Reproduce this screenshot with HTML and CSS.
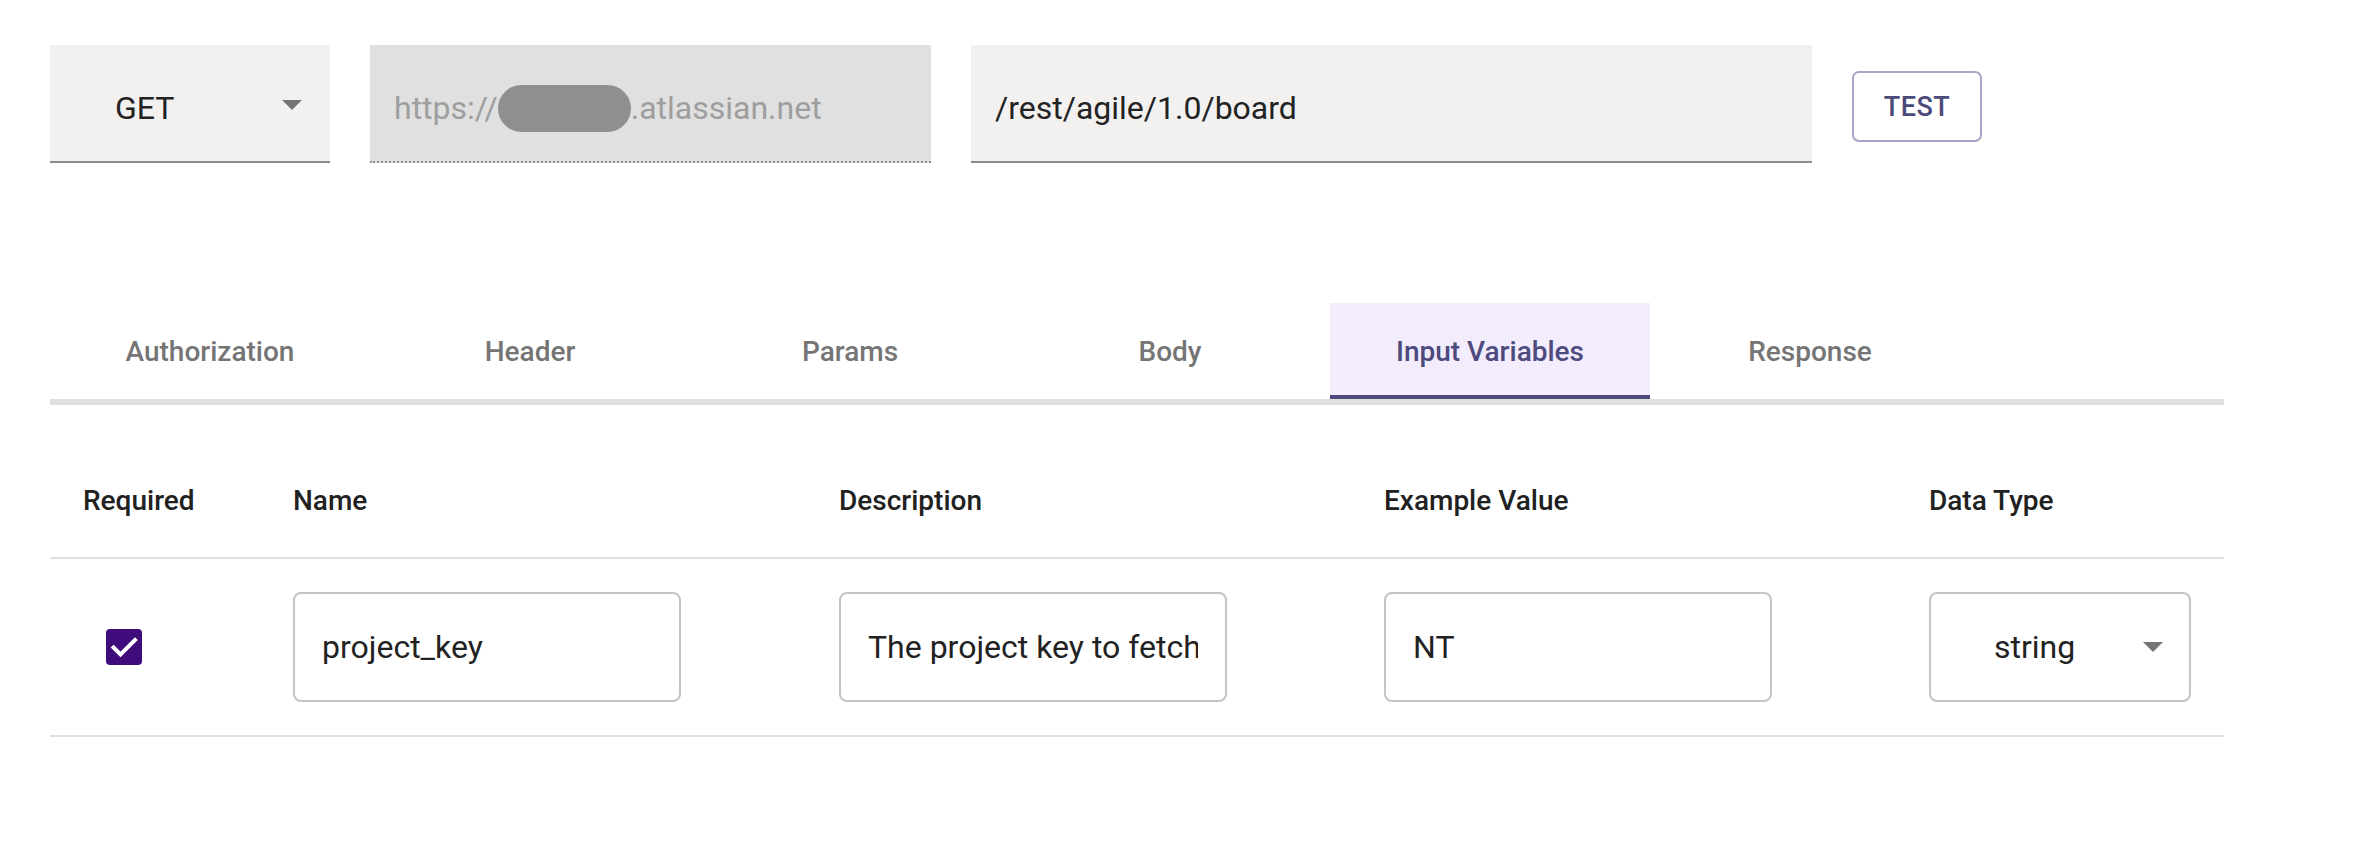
FILE: index.html
```html
<!DOCTYPE html>
<html lang="en">
<head>
<meta charset="utf-8">
<title>Request editor</title>
<link rel="stylesheet" href="styles.css">
</head>
<body>
<div class="page">
  <div class="request">
    <div class="field method">
      <span>GET</span>
      <span class="caret"></span>
    </div>
    <div class="field base">
      <span>https://</span><span class="blur"></span><span>.atlassian.net</span>
    </div>
    <div class="field path">
      <span>/rest/agile/1.0/board</span>
    </div>
    <button class="test-btn">TEST</button>
  </div>

  <div class="tabs">
    <div class="tab">Authorization</div>
    <div class="tab">Header</div>
    <div class="tab">Params</div>
    <div class="tab">Body</div>
    <div class="tab active">Input Variables</div>
    <div class="tab">Response</div>
  </div>

  <div class="vars">
    <div class="vars-row vars-head">
      <div class="cell">Required</div>
      <div class="cell">Name</div>
      <div class="cell">Description</div>
      <div class="cell">Example Value</div>
      <div class="cell">Data Type</div>
    </div>
    <div class="vars-row vars-body">
      <div class="cell">
        <span class="checkbox">
          <svg viewBox="0 0 36 36" width="36" height="36"><path d="M7.5 18.5 L14.5 25.5 L29 11" fill="none" stroke="#fff" stroke-width="4" stroke-linecap="square"/></svg>
        </span>
      </div>
      <div class="cell"><input class="text-input" type="text" value="project_key" readonly></div>
      <div class="cell"><input class="text-input" type="text" value="The project key to fetch" readonly></div>
      <div class="cell"><input class="text-input" type="text" value="NT" readonly></div>
      <div class="cell">
        <div class="select-box"><span>string</span><span class="caret"></span></div>
      </div>
    </div>
  </div>
</div>
</body>
</html>
```

FILE: styles.css
```css
html, body {
  margin: 0;
  padding: 0;
  background: #ffffff;
}

body {
  font-family: Roboto, "Liberation Sans", sans-serif;
  color: #222222;
}

.page {
  padding: 45px 0 0 50px;
  width: 2174px;
}

/* ---------- request bar ---------- */
.request {
  display: flex;
  align-items: center;
  gap: 40px;
}

.field {
  box-sizing: border-box;
  height: 118px;
  display: flex;
  align-items: center;
  font-size: 32px;
  padding-top: 10px;
  border-bottom: 2px solid #8c8c8c;
  white-space: nowrap;
}

.method {
  width: 280px;
  background: #f2f1f0;
  padding-left: 65px;
  padding-right: 28px;
  justify-content: space-between;
  color: #222222;
}

.method .caret {
  margin-top: -6px;
}

.caret {
  width: 0;
  height: 0;
  border-left: 10px solid transparent;
  border-right: 10px solid transparent;
  border-top: 10px solid #757575;
}

.base {
  width: 561px;
  background: #e0e0e0;
  border-bottom: 2px dotted #8c8c8c;
  padding-left: 24px;
  color: #9e9e9e;
}

.blur {
  display: inline-block;
  width: 133px;
  height: 47px;
  border-radius: 24px;
  background: #8f8f8f;
}

.path {
  width: 841px;
  background: #f2f1f0;
  padding-left: 24px;
  color: #222222;
}

.test-btn {
  box-sizing: border-box;
  width: 130px;
  height: 71px;
  margin-top: 5px;
  border: 2px solid #a8a5c4;
  border-radius: 7px;
  background: #ffffff;
  color: #4b4a7b;
  font-family: Roboto, "Liberation Sans", sans-serif;
  font-weight: 500;
  font-size: 27px;
  letter-spacing: 0.5px;
  padding: 0;
}

/* ---------- tabs ---------- */
.tabs {
  margin-top: 140px;
  display: flex;
  border-bottom: 6px solid #e0e0e0;
}

.tab {
  box-sizing: border-box;
  width: 320px;
  height: 96px;
  padding-top: 4px;
  border-bottom: 4px solid transparent;
  display: flex;
  align-items: center;
  justify-content: center;
  font-size: 28px;
  font-weight: 500;
  color: #757575;
}

.tab.active {
  background: #f2ecfd;
  color: #4d4a7e;
  border-bottom-color: #4d4a7e;
}

/* ---------- variables table ---------- */
.vars {
  margin-top: 38px;
}

.vars-row {
  display: grid;
  grid-template-columns: 210px 546px 545px 545px 328px;
  border-bottom: 2px solid #e0e0e0;
  align-items: center;
}

.vars-head {
  height: 114px;
}

.vars-body {
  padding: 33px 0;
}

.cell {
  padding-left: 33px;
  font-size: 28px;
  font-weight: 500;
  color: #212121;
  display: flex;
  align-items: center;
}

.checkbox {
  margin-left: 23px;
  width: 36px;
  height: 36px;
  border-radius: 4px;
  background: #3f0d7b;
  display: flex;
}

.text-input {
  box-sizing: border-box;
  width: 388px;
  height: 110px;
  border: 2px solid #c4c4c4;
  border-radius: 8px;
  padding: 0 27px 0 27px;
  margin: 0;
  font-family: Roboto, "Liberation Sans", sans-serif;
  font-size: 32px;
  font-weight: 400;
  color: #222222;
  background: #ffffff;
  outline: none;
}

.select-box {
  box-sizing: border-box;
  width: 262px;
  height: 110px;
  border: 2px solid #c4c4c4;
  border-radius: 8px;
  padding: 0 26px 0 63px;
  display: flex;
  align-items: center;
  justify-content: space-between;
  font-size: 32px;
  font-weight: 400;
  color: #222222;
}
```
